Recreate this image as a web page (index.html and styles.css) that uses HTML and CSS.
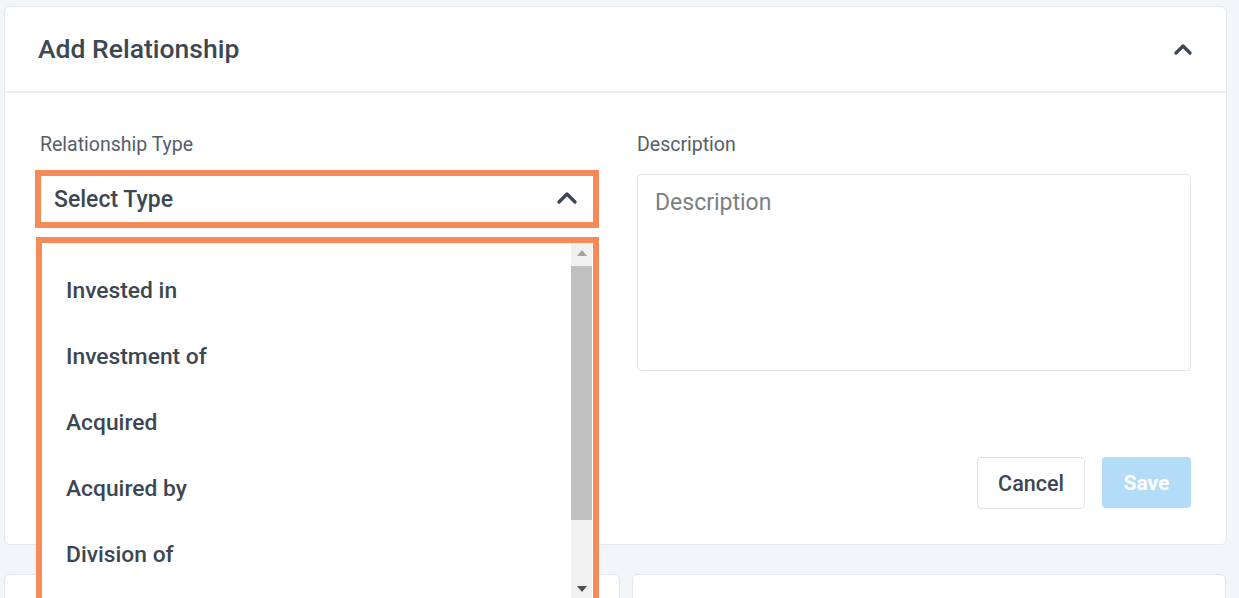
FILE: index.html
```html
<!DOCTYPE html>
<html>
<head>
<meta charset="utf-8">
<link rel="stylesheet" href="styles.css">
</head>
<body>
<div class="page">
  <section class="card">
    <header class="card-head">
      <h2 class="title">Add Relationship</h2>
      <svg class="chev" width="18" height="12" viewBox="0 0 18 12"><path d="M2 10 L9 3 L16 10" fill="none" stroke="#3d4752" stroke-width="3.2" stroke-linecap="round" stroke-linejoin="round"/></svg>
    </header>
    <div class="card-body">
      <div class="col col-left">
        <label class="label">Relationship Type</label>
        <div class="select">
          <span>Select Type</span>
          <svg width="22" height="14" viewBox="0 0 22 14"><path d="M3 11 L11 3 L19 11" fill="none" stroke="#3d4752" stroke-width="3.4" stroke-linecap="round" stroke-linejoin="round"/></svg>
        </div>
        <div class="dropdown">
          <ul class="options">
            <li>Invested in</li>
            <li>Investment of</li>
            <li>Acquired</li>
            <li>Acquired by</li>
            <li>Division of</li>
          </ul>
          <div class="sbar">
            <div class="sarrow up"></div>
            <div class="strack"><div class="sthumb"></div></div>
            <div class="sarrow down"></div>
          </div>
        </div>
      </div>
      <div class="col col-right">
        <label class="label">Description</label>
        <div class="textarea">Description</div>
        <div class="actions">
          <button class="btn btn-cancel">Cancel</button>
          <button class="btn btn-save">Save</button>
        </div>
      </div>
    </div>
  </section>
  <div class="lower">
    <section class="card small"></section>
    <section class="card small"></section>
  </div>
</div>
</body>
</html>
```

FILE: styles.css
```css
* { box-sizing: border-box; }
html, body { margin: 0; padding: 0; }
body {
  background: #f3f6f9;
  font-family: Roboto, "Noto Sans", "Liberation Sans", sans-serif;
  color: #3d4752;
  width: 1239px;
  height: 598px;
  overflow: hidden;
}
.page { padding: 6px 12px 0 4px; }
.card {
  background: #fff;
  border: 1px solid #e4e8ec;
  border-radius: 6px;
}
.card-head {
  height: 86px;
  border-bottom: 2px solid #eceff2;
  display: flex;
  align-items: center;
  justify-content: space-between;
  padding: 0 34px 0 33px;
}
.title {
  margin: 0;
  margin-top: -2px;
  font-size: 26.5px;
  font-weight: 500;
  color: #3d4752;
}
.card-body {
  display: grid;
  grid-template-columns: 554px 554px;
  column-gap: 43px;
  padding: 42px 34px 35px 35px;
}
.col { position: relative; display: flex; flex-direction: column; }
.label {
  font-size: 19.5px;
  line-height: 20px;
  color: #555e68;
  margin-bottom: 19px;
}
.select {
  margin: 2px 1px 0 1px;
  height: 46px;
  outline: 6px solid #f58b59;
  display: flex;
  align-items: center;
  justify-content: space-between;
  padding: 0 15px 0 13px;
  font-size: 23px;
  font-weight: 500;
  color: #3d4752;
}
.select svg { margin-top: -2px; }
.dropdown {
  position: absolute;
  left: 2px;
  top: 108px;
  width: 551px;
  height: 357px;
  background: #fff;
  outline: 6px solid #f58b59;
  display: flex;
  z-index: 5;
}
.options {
  list-style: none;
  margin: 0;
  padding: 15px 0 0 24px;
  flex: 1;
}
.options li {
  height: 66px;
  line-height: 66px;
  font-size: 22.8px;
  font-weight: 500;
  color: #3d4752;
}
.sbar {
  width: 21px;
  background: #f1f1f1;
  display: flex;
  flex-direction: column;
  margin-right: 1px;
}
.sarrow { height: 23px; position: relative; }
.sarrow::after {
  content: "";
  position: absolute;
  left: 6px;
  width: 0; height: 0;
  border-left: 5px solid transparent;
  border-right: 5px solid transparent;
}
.sarrow.up::after { top: 7px; border-bottom: 6px solid #a3a3a3; }
.sarrow.down::after { bottom: 8px; border-top: 6px solid #505050; }
.strack { flex: 1; }
.sthumb { height: 254px; background: #c1c1c1; }
.textarea {
  height: 197px;
  border: 1px solid #e2e5e9;
  border-radius: 4px;
  padding: 15px 17px;
  font-size: 23px;
  line-height: 26px;
  color: #7a7f85;
}
.actions {
  display: flex;
  justify-content: flex-end;
  gap: 17px;
  margin-top: 86px;
}
.btn {
  font-family: inherit;
  height: 52px;
  border-radius: 4px;
  font-size: 21.5px;
  font-weight: 500;
  padding: 0;
}
.btn-cancel {
  width: 108px;
  background: #fff;
  border: 1px solid #e0e3e7;
  color: #3d4752;
}
.btn-save {
  width: 89px;
  height: 51px;
  background: #b3dcf8;
  border: none;
  color: #fff;
  font-size: 21px;
  font-weight: 700;
}
.lower {
  display: grid;
  grid-template-columns: 616px 594px;
  column-gap: 12px;
  margin-top: 29px;
}
.card.small { height: 60px; }
```
